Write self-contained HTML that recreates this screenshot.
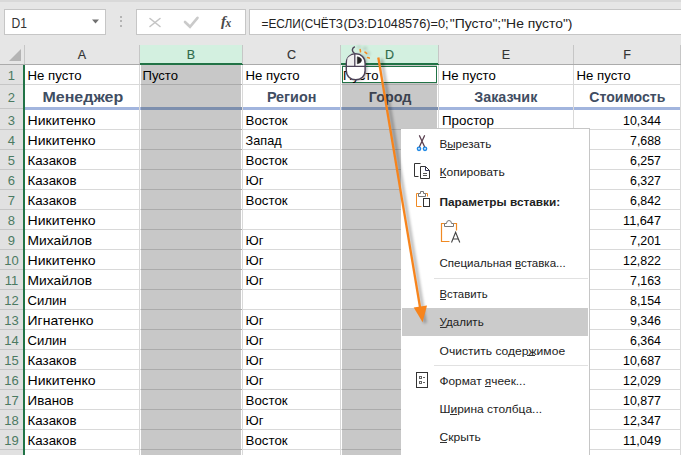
<!DOCTYPE html>
<html><head><meta charset="utf-8"><style>
html,body{margin:0;padding:0;background:#fff;overflow:hidden}
svg{display:block}
text{shape-rendering:auto}
path,circle,ellipse,polygon{shape-rendering:geometricPrecision}
</style></head><body><svg width="681" height="455" viewBox="0 0 681 455" shape-rendering="crispEdges"><rect x="0" y="0" width="681" height="455" fill="#ffffff"/><rect x="0" y="0" width="681" height="45" fill="#e6e6e6"/><rect x="0" y="0" width="681" height="2" fill="#d9d9d9"/><rect x="4" y="9" width="102" height="26" fill="#c6c6c6"/><rect x="5" y="10" width="100" height="24" fill="#ffffff"/><rect x="136" y="9" width="110" height="26" fill="#c6c6c6"/><rect x="137" y="10" width="108" height="24" fill="#ffffff"/><rect x="249" y="9" width="442" height="26" fill="#c6c6c6"/><rect x="250" y="10" width="440" height="24" fill="#ffffff"/><rect x="0" y="45" width="681" height="19" fill="#e6e6e6"/><rect x="0" y="64" width="681" height="1" fill="#ababab"/><rect x="139" y="45" width="1" height="19" fill="#c6c6c6"/><rect x="140" y="45" width="102" height="19" fill="#d3f0e0"/><rect x="140" y="63" width="103" height="2" fill="#217346"/><rect x="242" y="45" width="1" height="19" fill="#c6c6c6"/><rect x="340" y="45" width="1" height="19" fill="#c6c6c6"/><rect x="341" y="45" width="97" height="19" fill="#d3f0e0"/><rect x="341" y="63" width="98" height="2" fill="#217346"/><rect x="438" y="45" width="1" height="19" fill="#c6c6c6"/><rect x="573" y="45" width="1" height="19" fill="#c6c6c6"/><rect x="680" y="45" width="1" height="19" fill="#c6c6c6"/><rect x="24" y="45" width="1" height="19" fill="#c6c6c6"/><polygon points="9,61 21,61 21,49" fill="#b4b4b4"/><rect x="0" y="65" width="23" height="390" fill="#e1e1e1"/><rect x="24" y="45" width="1" height="19" fill="#c6c6c6"/><rect x="23" y="65" width="2" height="390" fill="#217346"/><rect x="141" y="65" width="100" height="390" fill="#c8c8c8"/><rect x="342" y="65" width="95" height="390" fill="#c8c8c8"/><rect x="25" y="84" width="656" height="1" fill="#d9d9d9"/><rect x="141" y="84" width="101" height="1" fill="#ababab"/><rect x="342" y="84" width="96" height="1" fill="#ababab"/><rect x="0" y="84" width="23" height="1" fill="#c6c6c6"/><rect x="25" y="129" width="656" height="1" fill="#d9d9d9"/><rect x="141" y="129" width="101" height="1" fill="#ababab"/><rect x="342" y="129" width="96" height="1" fill="#ababab"/><rect x="0" y="129" width="23" height="1" fill="#c6c6c6"/><rect x="25" y="149" width="656" height="1" fill="#d9d9d9"/><rect x="141" y="149" width="101" height="1" fill="#ababab"/><rect x="342" y="149" width="96" height="1" fill="#ababab"/><rect x="0" y="149" width="23" height="1" fill="#c6c6c6"/><rect x="25" y="169" width="656" height="1" fill="#d9d9d9"/><rect x="141" y="169" width="101" height="1" fill="#ababab"/><rect x="342" y="169" width="96" height="1" fill="#ababab"/><rect x="0" y="169" width="23" height="1" fill="#c6c6c6"/><rect x="25" y="189" width="656" height="1" fill="#d9d9d9"/><rect x="141" y="189" width="101" height="1" fill="#ababab"/><rect x="342" y="189" width="96" height="1" fill="#ababab"/><rect x="0" y="189" width="23" height="1" fill="#c6c6c6"/><rect x="25" y="209" width="656" height="1" fill="#d9d9d9"/><rect x="141" y="209" width="101" height="1" fill="#ababab"/><rect x="342" y="209" width="96" height="1" fill="#ababab"/><rect x="0" y="209" width="23" height="1" fill="#c6c6c6"/><rect x="25" y="229" width="656" height="1" fill="#d9d9d9"/><rect x="141" y="229" width="101" height="1" fill="#ababab"/><rect x="342" y="229" width="96" height="1" fill="#ababab"/><rect x="0" y="229" width="23" height="1" fill="#c6c6c6"/><rect x="25" y="249" width="656" height="1" fill="#d9d9d9"/><rect x="141" y="249" width="101" height="1" fill="#ababab"/><rect x="342" y="249" width="96" height="1" fill="#ababab"/><rect x="0" y="249" width="23" height="1" fill="#c6c6c6"/><rect x="25" y="269" width="656" height="1" fill="#d9d9d9"/><rect x="141" y="269" width="101" height="1" fill="#ababab"/><rect x="342" y="269" width="96" height="1" fill="#ababab"/><rect x="0" y="269" width="23" height="1" fill="#c6c6c6"/><rect x="25" y="289" width="656" height="1" fill="#d9d9d9"/><rect x="141" y="289" width="101" height="1" fill="#ababab"/><rect x="342" y="289" width="96" height="1" fill="#ababab"/><rect x="0" y="289" width="23" height="1" fill="#c6c6c6"/><rect x="25" y="309" width="656" height="1" fill="#d9d9d9"/><rect x="141" y="309" width="101" height="1" fill="#ababab"/><rect x="342" y="309" width="96" height="1" fill="#ababab"/><rect x="0" y="309" width="23" height="1" fill="#c6c6c6"/><rect x="25" y="329" width="656" height="1" fill="#d9d9d9"/><rect x="141" y="329" width="101" height="1" fill="#ababab"/><rect x="342" y="329" width="96" height="1" fill="#ababab"/><rect x="0" y="329" width="23" height="1" fill="#c6c6c6"/><rect x="25" y="349" width="656" height="1" fill="#d9d9d9"/><rect x="141" y="349" width="101" height="1" fill="#ababab"/><rect x="342" y="349" width="96" height="1" fill="#ababab"/><rect x="0" y="349" width="23" height="1" fill="#c6c6c6"/><rect x="25" y="369" width="656" height="1" fill="#d9d9d9"/><rect x="141" y="369" width="101" height="1" fill="#ababab"/><rect x="342" y="369" width="96" height="1" fill="#ababab"/><rect x="0" y="369" width="23" height="1" fill="#c6c6c6"/><rect x="25" y="389" width="656" height="1" fill="#d9d9d9"/><rect x="141" y="389" width="101" height="1" fill="#ababab"/><rect x="342" y="389" width="96" height="1" fill="#ababab"/><rect x="0" y="389" width="23" height="1" fill="#c6c6c6"/><rect x="25" y="409" width="656" height="1" fill="#d9d9d9"/><rect x="141" y="409" width="101" height="1" fill="#ababab"/><rect x="342" y="409" width="96" height="1" fill="#ababab"/><rect x="0" y="409" width="23" height="1" fill="#c6c6c6"/><rect x="25" y="429" width="656" height="1" fill="#d9d9d9"/><rect x="141" y="429" width="101" height="1" fill="#ababab"/><rect x="342" y="429" width="96" height="1" fill="#ababab"/><rect x="0" y="429" width="23" height="1" fill="#c6c6c6"/><rect x="25" y="449" width="656" height="1" fill="#d9d9d9"/><rect x="141" y="449" width="101" height="1" fill="#ababab"/><rect x="342" y="449" width="96" height="1" fill="#ababab"/><rect x="0" y="449" width="23" height="1" fill="#c6c6c6"/><rect x="25" y="107" width="656" height="3" fill="#a2b5de"/><rect x="141" y="107" width="101" height="3" fill="#7d8fae"/><rect x="342" y="107" width="96" height="3" fill="#7d8fae"/><rect x="0" y="108" width="23" height="1" fill="#c6c6c6"/><rect x="139" y="65" width="1" height="390" fill="#d9d9d9"/><rect x="242" y="65" width="1" height="390" fill="#d9d9d9"/><rect x="340" y="65" width="1" height="390" fill="#d9d9d9"/><rect x="438" y="65" width="1" height="390" fill="#d9d9d9"/><rect x="573" y="65" width="1" height="390" fill="#d9d9d9"/><rect x="680" y="65" width="1" height="390" fill="#d9d9d9"/><rect x="342.5" y="66.5" width="94" height="16" fill="#fff" stroke="#217346" stroke-width="1.5"/><g font-family='"Liberation Sans", sans-serif'><text x="82.0" y="59" font-size="12.5" fill="#333333" text-anchor="middle" stroke="#333" stroke-width="0.15">A</text><text x="191.0" y="59" font-size="12.5" fill="#2f6a4a" text-anchor="middle" stroke="#2f6a4a" stroke-width="0.15">B</text><text x="291.5" y="59" font-size="12.5" fill="#333333" text-anchor="middle" stroke="#333" stroke-width="0.15">C</text><text x="389.5" y="59" font-size="12.5" fill="#2f6a4a" text-anchor="middle" stroke="#2f6a4a" stroke-width="0.15">D</text><text x="506.0" y="59" font-size="12.5" fill="#333333" text-anchor="middle" stroke="#333" stroke-width="0.15">E</text><text x="627.0" y="59" font-size="12.5" fill="#333333" text-anchor="middle" stroke="#333" stroke-width="0.15">F</text><text x="11.4" y="80" font-size="13" fill="#4b7a62" text-anchor="middle">1</text><text x="11.4" y="102" font-size="13" fill="#4b7a62" text-anchor="middle">2</text><text x="11.4" y="125" font-size="13" fill="#4b7a62" text-anchor="middle">3</text><text x="11.4" y="145" font-size="13" fill="#4b7a62" text-anchor="middle">4</text><text x="11.4" y="165" font-size="13" fill="#4b7a62" text-anchor="middle">5</text><text x="11.4" y="185" font-size="13" fill="#4b7a62" text-anchor="middle">6</text><text x="11.4" y="205" font-size="13" fill="#4b7a62" text-anchor="middle">7</text><text x="11.4" y="225" font-size="13" fill="#4b7a62" text-anchor="middle">8</text><text x="11.4" y="245" font-size="13" fill="#4b7a62" text-anchor="middle">9</text><text x="11.4" y="265" font-size="13" fill="#4b7a62" text-anchor="middle">10</text><text x="11.4" y="285" font-size="13" fill="#4b7a62" text-anchor="middle">11</text><text x="11.4" y="305" font-size="13" fill="#4b7a62" text-anchor="middle">12</text><text x="11.4" y="325" font-size="13" fill="#4b7a62" text-anchor="middle">13</text><text x="11.4" y="345" font-size="13" fill="#4b7a62" text-anchor="middle">14</text><text x="11.4" y="365" font-size="13" fill="#4b7a62" text-anchor="middle">15</text><text x="11.4" y="385" font-size="13" fill="#4b7a62" text-anchor="middle">16</text><text x="11.4" y="405" font-size="13" fill="#4b7a62" text-anchor="middle">17</text><text x="11.4" y="425" font-size="13" fill="#4b7a62" text-anchor="middle">18</text><text x="11.4" y="445" font-size="13" fill="#4b7a62" text-anchor="middle">19</text><text x="11.5" y="28" font-size="14" fill="#333" textLength="15.5" lengthAdjust="spacingAndGlyphs">D1</text><text x="261.5" y="27.5" font-size="13.5" fill="#222" textLength="81.5" lengthAdjust="spacingAndGlyphs">=ЕСЛИ(СЧЁТЗ</text><text x="343.5" y="27.5" font-size="13.5" fill="#222" textLength="105" lengthAdjust="spacingAndGlyphs">(D3:D1048576)=0;</text><text x="449.8" y="27.5" font-size="13.5" fill="#222" textLength="122.7" lengthAdjust="spacingAndGlyphs">&quot;Пусто&quot;;&quot;Не пусто&quot;)</text><text x="27.5" y="80" font-size="13.2" fill="#000" textLength="54" lengthAdjust="spacingAndGlyphs">Не пусто</text><text x="142.5" y="80" font-size="13.2" fill="#000" textLength="35.5" lengthAdjust="spacingAndGlyphs">Пусто</text><text x="245.5" y="80" font-size="13.2" fill="#000" textLength="54" lengthAdjust="spacingAndGlyphs">Не пусто</text><text x="343" y="80" font-size="13.2" fill="#000" textLength="35.5" lengthAdjust="spacingAndGlyphs">Пусто</text><text x="441.8" y="80" font-size="13.2" fill="#000" textLength="54" lengthAdjust="spacingAndGlyphs">Не пусто</text><text x="576.5" y="80" font-size="13.2" fill="#000" textLength="54" lengthAdjust="spacingAndGlyphs">Не пусто</text><text x="42.5" y="102" font-size="15" fill="#3f4d62" font-weight="bold" textLength="80.7" lengthAdjust="spacingAndGlyphs">Менеджер</text><text x="266.9" y="102" font-size="15" fill="#3f4d62" font-weight="bold" textLength="49.5" lengthAdjust="spacingAndGlyphs">Регион</text><text x="368.8" y="102" font-size="15" fill="#3c4350" font-weight="bold" textLength="42.7" lengthAdjust="spacingAndGlyphs">Город</text><text x="474.3" y="102" font-size="15" fill="#3f4d62" font-weight="bold" textLength="63.0" lengthAdjust="spacingAndGlyphs">Заказчик</text><text x="589.3" y="102" font-size="15" fill="#3f4d62" font-weight="bold" textLength="76.1" lengthAdjust="spacingAndGlyphs">Стоимость</text><text x="27.6" y="125" font-size="13.2" fill="#000" textLength="68" lengthAdjust="spacingAndGlyphs">Никитенко</text><text x="245.6" y="125" font-size="13.2" fill="#000" textLength="42" lengthAdjust="spacingAndGlyphs">Восток</text><text x="623" y="125" font-size="13.2" fill="#000" textLength="38" lengthAdjust="spacingAndGlyphs">10,344</text><text x="27.6" y="145" font-size="13.2" fill="#000" textLength="68" lengthAdjust="spacingAndGlyphs">Никитенко</text><text x="245.6" y="145" font-size="13.2" fill="#000" textLength="36" lengthAdjust="spacingAndGlyphs">Запад</text><text x="630" y="145" font-size="13.2" fill="#000" textLength="31" lengthAdjust="spacingAndGlyphs">7,688</text><text x="27.6" y="165" font-size="13.2" fill="#000" textLength="49" lengthAdjust="spacingAndGlyphs">Казаков</text><text x="245.6" y="165" font-size="13.2" fill="#000" textLength="42" lengthAdjust="spacingAndGlyphs">Восток</text><text x="630" y="165" font-size="13.2" fill="#000" textLength="31" lengthAdjust="spacingAndGlyphs">6,257</text><text x="27.6" y="185" font-size="13.2" fill="#000" textLength="49" lengthAdjust="spacingAndGlyphs">Казаков</text><text x="245.6" y="185" font-size="13.2" fill="#000" textLength="18" lengthAdjust="spacingAndGlyphs">Юг</text><text x="630" y="185" font-size="13.2" fill="#000" textLength="31" lengthAdjust="spacingAndGlyphs">6,327</text><text x="27.6" y="205" font-size="13.2" fill="#000" textLength="49" lengthAdjust="spacingAndGlyphs">Казаков</text><text x="245.6" y="205" font-size="13.2" fill="#000" textLength="42" lengthAdjust="spacingAndGlyphs">Восток</text><text x="630" y="205" font-size="13.2" fill="#000" textLength="31" lengthAdjust="spacingAndGlyphs">6,842</text><text x="27.6" y="225" font-size="13.2" fill="#000" textLength="68" lengthAdjust="spacingAndGlyphs">Никитенко</text><text x="623" y="225" font-size="13.2" fill="#000" textLength="38" lengthAdjust="spacingAndGlyphs">11,647</text><text x="27.6" y="245" font-size="13.2" fill="#000" textLength="64.5" lengthAdjust="spacingAndGlyphs">Михайлов</text><text x="245.6" y="245" font-size="13.2" fill="#000" textLength="18" lengthAdjust="spacingAndGlyphs">Юг</text><text x="630" y="245" font-size="13.2" fill="#000" textLength="31" lengthAdjust="spacingAndGlyphs">7,201</text><text x="27.6" y="265" font-size="13.2" fill="#000" textLength="68" lengthAdjust="spacingAndGlyphs">Никитенко</text><text x="245.6" y="265" font-size="13.2" fill="#000" textLength="18" lengthAdjust="spacingAndGlyphs">Юг</text><text x="623" y="265" font-size="13.2" fill="#000" textLength="38" lengthAdjust="spacingAndGlyphs">12,822</text><text x="27.6" y="285" font-size="13.2" fill="#000" textLength="64.5" lengthAdjust="spacingAndGlyphs">Михайлов</text><text x="245.6" y="285" font-size="13.2" fill="#000" textLength="18" lengthAdjust="spacingAndGlyphs">Юг</text><text x="630" y="285" font-size="13.2" fill="#000" textLength="31" lengthAdjust="spacingAndGlyphs">7,163</text><text x="27.6" y="305" font-size="13.2" fill="#000" textLength="39" lengthAdjust="spacingAndGlyphs">Силин</text><text x="630" y="305" font-size="13.2" fill="#000" textLength="31" lengthAdjust="spacingAndGlyphs">8,154</text><text x="27.6" y="325" font-size="13.2" fill="#000" textLength="66" lengthAdjust="spacingAndGlyphs">Игнатенко</text><text x="245.6" y="325" font-size="13.2" fill="#000" textLength="18" lengthAdjust="spacingAndGlyphs">Юг</text><text x="630" y="325" font-size="13.2" fill="#000" textLength="31" lengthAdjust="spacingAndGlyphs">9,346</text><text x="27.6" y="345" font-size="13.2" fill="#000" textLength="39" lengthAdjust="spacingAndGlyphs">Силин</text><text x="245.6" y="345" font-size="13.2" fill="#000" textLength="18" lengthAdjust="spacingAndGlyphs">Юг</text><text x="630" y="345" font-size="13.2" fill="#000" textLength="31" lengthAdjust="spacingAndGlyphs">6,364</text><text x="27.6" y="365" font-size="13.2" fill="#000" textLength="49" lengthAdjust="spacingAndGlyphs">Казаков</text><text x="245.6" y="365" font-size="13.2" fill="#000" textLength="18" lengthAdjust="spacingAndGlyphs">Юг</text><text x="623" y="365" font-size="13.2" fill="#000" textLength="38" lengthAdjust="spacingAndGlyphs">10,687</text><text x="27.6" y="385" font-size="13.2" fill="#000" textLength="68" lengthAdjust="spacingAndGlyphs">Никитенко</text><text x="245.6" y="385" font-size="13.2" fill="#000" textLength="18" lengthAdjust="spacingAndGlyphs">Юг</text><text x="623" y="385" font-size="13.2" fill="#000" textLength="38" lengthAdjust="spacingAndGlyphs">12,029</text><text x="27.6" y="405" font-size="13.2" fill="#000" textLength="46" lengthAdjust="spacingAndGlyphs">Иванов</text><text x="245.6" y="405" font-size="13.2" fill="#000" textLength="42" lengthAdjust="spacingAndGlyphs">Восток</text><text x="623" y="405" font-size="13.2" fill="#000" textLength="38" lengthAdjust="spacingAndGlyphs">10,877</text><text x="27.6" y="425" font-size="13.2" fill="#000" textLength="49" lengthAdjust="spacingAndGlyphs">Казаков</text><text x="245.6" y="425" font-size="13.2" fill="#000" textLength="18" lengthAdjust="spacingAndGlyphs">Юг</text><text x="623" y="425" font-size="13.2" fill="#000" textLength="38" lengthAdjust="spacingAndGlyphs">12,347</text><text x="27.6" y="445" font-size="13.2" fill="#000" textLength="49" lengthAdjust="spacingAndGlyphs">Казаков</text><text x="245.6" y="445" font-size="13.2" fill="#000" textLength="42" lengthAdjust="spacingAndGlyphs">Восток</text><text x="623" y="445" font-size="13.2" fill="#000" textLength="38" lengthAdjust="spacingAndGlyphs">11,049</text><text x="442" y="125" font-size="13.2" fill="#000" textLength="52" lengthAdjust="spacingAndGlyphs">Простор</text></g><defs><filter id="sh" x="-20%" y="-20%" width="140%" height="140%"><feGaussianBlur stdDeviation="3"/></filter><filter id="sh2" x="-50%" y="-50%" width="200%" height="200%"><feGaussianBlur stdDeviation="1.5"/></filter></defs><rect x="401" y="128" width="189" height="327" fill="#c6c6c6"/><rect x="401" y="129" width="188" height="327" fill="#ffffff"/><rect x="402" y="308" width="186" height="28" fill="#cbcbcb"/><rect x="434" y="278" width="154" height="1" fill="#e1e1e1"/><rect x="434" y="365" width="154" height="1" fill="#e1e1e1"/><g font-family='"Liberation Sans", sans-serif'><text x="439.5" y="148.3" font-size="11.5" fill="#222" textLength="51.7" lengthAdjust="spacingAndGlyphs">Вырезать</text><text x="439.5" y="176" font-size="11.5" fill="#222" textLength="65.2" lengthAdjust="spacingAndGlyphs">Копировать</text><text x="439.5" y="206.4" font-size="11.5" fill="#222" font-weight="bold" textLength="120.7" lengthAdjust="spacingAndGlyphs">Параметры вставки:</text><text x="439.5" y="267.2" font-size="11.5" fill="#222" textLength="126.2" lengthAdjust="spacingAndGlyphs">Специальная вставка...</text><text x="439.5" y="297.6" font-size="11.5" fill="#222" textLength="48.2" lengthAdjust="spacingAndGlyphs">Вставить</text><text x="439.5" y="325.8" font-size="11.5" fill="#222" textLength="44.2" lengthAdjust="spacingAndGlyphs">Удалить</text><text x="439.5" y="355" font-size="11.5" fill="#222" textLength="125.60000000000001" lengthAdjust="spacingAndGlyphs">Очистить содержимое</text><text x="439.5" y="385.4" font-size="11.5" fill="#222" textLength="86.2" lengthAdjust="spacingAndGlyphs">Формат ячеек...</text><text x="439.5" y="413.4" font-size="11.5" fill="#222" textLength="102.60000000000001" lengthAdjust="spacingAndGlyphs">Ширина столбца...</text><text x="439.5" y="441" font-size="11.5" fill="#222" textLength="41.2" lengthAdjust="spacingAndGlyphs">Скрыть</text></g><rect x="446" y="149" width="9" height="1" fill="#333"/><rect x="439.5" y="177" width="6.5" height="1" fill="#333"/><rect x="515" y="268" width="6" height="1" fill="#333"/><rect x="439.5" y="299" width="6.5" height="1" fill="#333"/><rect x="439.5" y="327" width="6.5" height="1" fill="#333"/><rect x="526.5" y="355" width="8.5" height="1" fill="#333"/><rect x="485" y="386" width="6" height="1" fill="#333"/><rect x="450" y="414" width="6.5" height="1" fill="#333"/><rect x="440" y="442" width="7" height="1" fill="#333"/><g fill="none" stroke-linecap="round"><path d="M419.5,135.8 L424.8,147.2 M424.5,135.8 L419.2,147.2" stroke="#5a4050" stroke-width="1.3"/><circle cx="419" cy="148.8" r="1.7" stroke="#1e88e5" stroke-width="1.3" fill="#bfe0ff"/><circle cx="425" cy="148.8" r="1.7" stroke="#1e88e5" stroke-width="1.3" fill="#bfe0ff"/></g><g fill="none" stroke="#333" stroke-width="1"><path d="M420.5,163.5 H414.5 V176.5 H418.5"/><path d="M420.5,166.5 H425.5 L429.5,170.5 V178.5 H420.5 Z"/><path d="M425.5,166.5 V170.5 H429.5" stroke="#335"/><path d="M423,173.5 H427 M423,175.5 H427" stroke="#555"/></g><g fill="none" stroke-width="1"><path d="M421.5,206.5 H416.5 V193.5 H418.5 M425.5,193.5 H427.5 V196.5" stroke="#f08a24"/><path d="M418.5,196.5 V193.5 H420.5 V191.5 H423.5 V193.5 H425.5 V196.5 Z" stroke="#777"/><rect x="423.5" y="198.5" width="6" height="8" stroke="#333"/></g><g fill="none" stroke-width="1"><path d="M449.5,241.5 H441.5 V223.5 H444.5 M453.5,223.5 H456.5 V230.5" stroke="#f08a24" stroke-width="1.2"/><path d="M444.5,226.5 V223.5 H446.5 Q446.5,220.5 449,220.5 Q451.5,220.5 451.5,223.5 H453.5 V226.5 Z" stroke="#777"/><path d="M451.5,242.5 L455.6,232.2 L459.8,242.5 M453,239 H458.3" stroke="#444" stroke-width="1.1"/></g><g fill="none" stroke-width="1"><rect x="416.5" y="372.5" width="11" height="15" stroke="#333"/><rect x="419.5" y="376.5" width="2" height="2" stroke="#666"/><rect x="419.5" y="381.5" width="2" height="2" stroke="#666"/><path d="M423,377.5 H425 M423,382.5 H425" stroke="#666"/></g><g fill="none" stroke-linecap="round"><path d="M150,18.5 L160,26.5 M160,18.5 L150,26.5" stroke="#c4c4c4" stroke-width="1.6"/><path d="M185,22 L190,26.8 L197.5,17.8" stroke="#cacaca" stroke-width="2.6"/></g><text x="221" y="26" font-family="Liberation Serif" font-style="italic" font-weight="bold" font-size="15" fill="#4a4a4a">f</text><text x="225.5" y="26.5" font-family="Liberation Serif" font-style="italic" font-weight="bold" font-size="11.5" fill="#4a4a4a">x</text><polygon points="92,19.5 99,19.5 95.5,23.5" fill="#707070"/><rect x="120" y="16" width="2" height="2" fill="#b4b4b4"/><rect x="120" y="20" width="2" height="2" fill="#b4b4b4"/><rect x="120" y="25" width="2" height="2" fill="#b4b4b4"/><g><path d="M355.7,53.8 C361.2,53.8 365.1,57.5 365.1,63.5 L365.1,70.5 C365.1,76.3 361,79.8 355.7,79.8 C350.4,79.8 346.3,76.3 346.3,70.5 L346.3,63.5 C346.3,57.5 350.2,53.8 355.7,53.8 Z" fill="#000" opacity="0.35" filter="url(#sh2)" transform="translate(1.5,0.5)"/><path d="M363,49 l4,-1 M366,53 l4,1 M358,48 l2,-2" stroke="#000" stroke-width="3" opacity="0.15" filter="url(#sh2)"/><path d="M354.8,53.8 C351.5,51.5 351.5,48.5 354.8,46.6" fill="none" stroke="#4d4358" stroke-width="1.4"/><path d="M355.7,53.8 C361.2,53.8 365.1,57.5 365.1,63.5 L365.1,70.5 C365.1,76.3 361,79.8 355.7,79.8 C350.4,79.8 346.3,76.3 346.3,70.5 L346.3,63.5 C346.3,57.5 350.2,53.8 355.7,53.8 Z" fill="#fff" stroke="#4d4358" stroke-width="1.4"/><path d="M347.5,58 Q350,55 354,54.8 V66 H347 Z" fill="#f0f0f0"/><path d="M354.8,54 V66.4 M346.5,66.4 H365" stroke="#4d4358" stroke-width="1.3"/><path d="M357.3,56.8 V63.8 Q361.5,63 361.5,60.3 Q361.5,57.5 357.3,56.8 Z" fill="#222" stroke="#333" stroke-width="0.6"/><path d="M360.2,49.5 L360.5,51.8 M365,52.2 L366.6,53.4 M367.6,57.5 L369.3,58.1" stroke="#f5891f" stroke-width="1.6" stroke-linecap="round"/></g><g><path d="M379,58 L422.6,322" stroke="#000" stroke-width="3" opacity="0.3" filter="url(#sh2)" transform="translate(2.5,1)"/><path d="M378.3,57.5 L420.5,310" stroke="#f7841c" stroke-width="2.3"/><polygon points="413.7,307.5 427,305.5 422.6,322.3" fill="#f7841c"/></g></svg></body></html>
